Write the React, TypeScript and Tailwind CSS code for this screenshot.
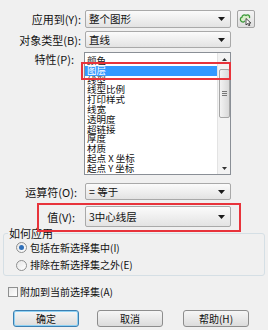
import React from 'react'

const items = [
  '颜色',
  '图层',
  '线型',
  '线型比例',
  '打印样式',
  '线宽',
  '透明度',
  '超链接',
  '厚度',
  '材质',
  '起点 X 坐标',
  '起点 Y 坐标',
]

function Arrow() {
  return (
    <svg width="7" height="4" viewBox="0 0 7 4" className="shrink-0">
      <path d="M0 0h7L3.5 4z" fill="#1a1a1a" />
    </svg>
  )
}

function Combo({ text }: { text: string }) {
  return (
    <div className="flex h-full w-[146px] items-center rounded-[2px] border border-[#a9a9a9] bg-linear-to-b from-[#fbfbfb] to-[#e3e3e3] pl-[3px] pr-[5px] text-[10.5px] leading-[14px]">
      <span className="flex-1 whitespace-nowrap">{text}</span>
      <Arrow />
    </div>
  )
}

function Label({ children, className = '' }: { children: React.ReactNode; className?: string }) {
  return <div className={`w-[81px] shrink-0 text-right text-[11px] leading-[14px] ${className}`}>{children}</div>
}

function Radio({ checked }: { checked?: boolean }) {
  return (
    <span className="flex h-[11px] w-[11px] shrink-0 items-center justify-center rounded-full border border-[#8e8f8f] bg-linear-to-br from-[#e6e6e6] to-[#ffffff]">
      {checked && <span className="h-[5px] w-[5px] rounded-full bg-[#2f6fb9]" />}
    </span>
  )
}

function Btn({ children, primary }: { children: React.ReactNode; primary?: boolean }) {
  return (
    <button
      className={`flex h-[17px] w-[66px] items-center justify-center rounded-[3px] border bg-linear-to-b from-[#f6f6f6] to-[#dcdcdc] text-[10px] leading-[14px] ${
        primary ? 'border-[#3c7fb1] shadow-[inset_0_0_0_1px_#8fd1f3]' : 'border-[#8d8d8d]'
      }`}
    >
      {children}
    </button>
  )
}

export default function App() {
  return (
    <div className="relative h-[330px] w-[268px] overflow-hidden bg-[#f0f0f0] font-['Noto_Sans_CJK_SC',sans-serif] text-[#111]">
      <div className="flex flex-col pt-[10px]">
        {/* 应用到 */}
        <div className="flex h-[18px] items-center">
          <Label>应用到(Y):</Label>
          <div className="ml-[4px] h-full">
            <Combo text="整个图形" />
          </div>
          <div className="ml-[6px] flex h-[18px] w-[18px] items-center justify-center rounded-[2px] border border-[#a3a3a3] bg-linear-to-b from-[#f4f4f4] to-[#dedede]">
            <svg width="14" height="13" viewBox="0 0 14 13">
              <path
                d="M2.5 8.5C0.8 7.5 1 4.5 3 4.2C3 2.2 5.5 1.2 7 2.4C8.6 1.2 11 2.3 10.6 4.5"
                fill="#d8f0c8"
                stroke="#3d9a3a"
                strokeWidth="1.3"
                strokeLinecap="round"
              />
              <path d="M2.5 8.5C3.5 9.2 5 9 5.6 8.2" fill="none" stroke="#3d9a3a" strokeWidth="1.3" strokeLinecap="round" />
              <path d="M7 5.5v6.5l1.6-1.5 1.2 2.3 1.1-.6-1.2-2.2h2.2z" fill="#fff" stroke="#222" strokeWidth="0.8" strokeLinejoin="round" />
            </svg>
          </div>
        </div>

        {/* 对象类型 */}
        <div className="mt-[3px] flex h-[17px] items-center">
          <Label>对象类型(B):</Label>
          <div className="ml-[4px] h-full">
            <Combo text="直线" />
          </div>
        </div>

        {/* 特性 */}
        <div className="mt-[4px] flex items-start">
          <Label className="pr-[7px]">特性(P):</Label>
          <div className="relative ml-[3px] flex h-[123px] w-[147px] border border-[#8a8f96] bg-white">
            <div className="flex-1 pt-[3px] text-[9.5px] leading-[9.8px]">
              {items.map((it, i) => (
                <div
                  key={it}
                  className={`h-[9.8px] whitespace-pre pl-[2px] ${i === 1 ? 'bg-[#3399ff] text-white' : ''}`}
                >
                  {it}
                </div>
              ))}
            </div>
            {/* scrollbar */}
            <div className="flex w-[13px] flex-col items-center border-l border-[#e3e3e3] bg-[#f3f3f3]">
              <div className="flex h-[12px] items-center justify-center">
                <svg width="5" height="3" viewBox="0 0 5 3">
                  <path d="M0 3h5L2.5 0z" fill="#333" />
                </svg>
              </div>
              <div className="mt-[4px] flex h-[49px] w-[11px] items-center justify-center rounded-[2px] border border-[#a5a5a5] bg-linear-to-r from-[#f3f3f3] to-[#d9d9d9]">
                <div className="flex flex-col gap-[1px]">
                  <span className="h-px w-[5px] bg-[#777]" />
                  <span className="h-px w-[5px] bg-[#777]" />
                  <span className="h-px w-[5px] bg-[#777]" />
                </div>
              </div>
              <div className="flex-1" />
              <div className="flex h-[12px] items-center justify-center">
                <svg width="5" height="3" viewBox="0 0 5 3">
                  <path d="M0 0h5L2.5 3z" fill="#333" />
                </svg>
              </div>
            </div>
            {/* annotation */}
            <div className="pointer-events-none absolute left-[-4px] top-[9px] h-[18px] w-[150px] border-2 border-[#e8333b]" />
          </div>
        </div>

        {/* 运算符 */}
        <div className="mt-[8px] flex h-[17px] items-center">
          <Label className="pr-[4px]">运算符(O):</Label>
          <div className="ml-[4px] h-full">
            <Combo text="= 等于" />
          </div>
        </div>

        {/* 值 */}
        <div className="relative mt-[6px] flex h-[21px] items-center">
          <Label className="pr-[6px]">值(V):</Label>
          <div className="ml-[4px] h-full">
            <Combo text="3中心线层" />
          </div>
          <div className="pointer-events-none absolute left-[37px] top-[-3px] h-[29px] w-[204px] border-2 border-[#e8333b]" />
        </div>

        {/* 如何应用 */}
        <fieldset className="mx-[3px] mt-[1px] rounded-[3px] border border-[#d5dfe5] pb-[1px]">
          <legend className="ml-[4px] px-[1px] text-[11px] leading-[11px]">如何应用</legend>
          <div className="flex h-[17px] items-center pl-[12px] text-[10px] leading-[14px]">
            <Radio checked />
            <span className="ml-[3px]">包括在新选择集中(I)</span>
          </div>
          <div className="flex h-[18px] items-center pl-[12px] text-[10px] leading-[14px]">
            <Radio />
            <span className="ml-[3px]">排除在新选择集之外(E)</span>
          </div>
        </fieldset>

        {/* 附加 */}
        <div className="mt-[10px] flex h-[12px] items-center pl-[8px] text-[10px] leading-[14px]">
          <span className="h-[10px] w-[10px] shrink-0 border border-[#8e8f8f] bg-linear-to-br from-[#e8e8e8] to-white" />
          <span className="ml-[2px]">附加到当前选择集(A)</span>
        </div>

        {/* buttons */}
        <div className="mt-[12px] flex pl-[13px]">
          <Btn primary>确定</Btn>
          <div className="ml-[18px]">
            <Btn>取消</Btn>
          </div>
          <div className="ml-[20px]">
            <Btn>帮助(H)</Btn>
          </div>
        </div>
      </div>
    </div>
  )
}
